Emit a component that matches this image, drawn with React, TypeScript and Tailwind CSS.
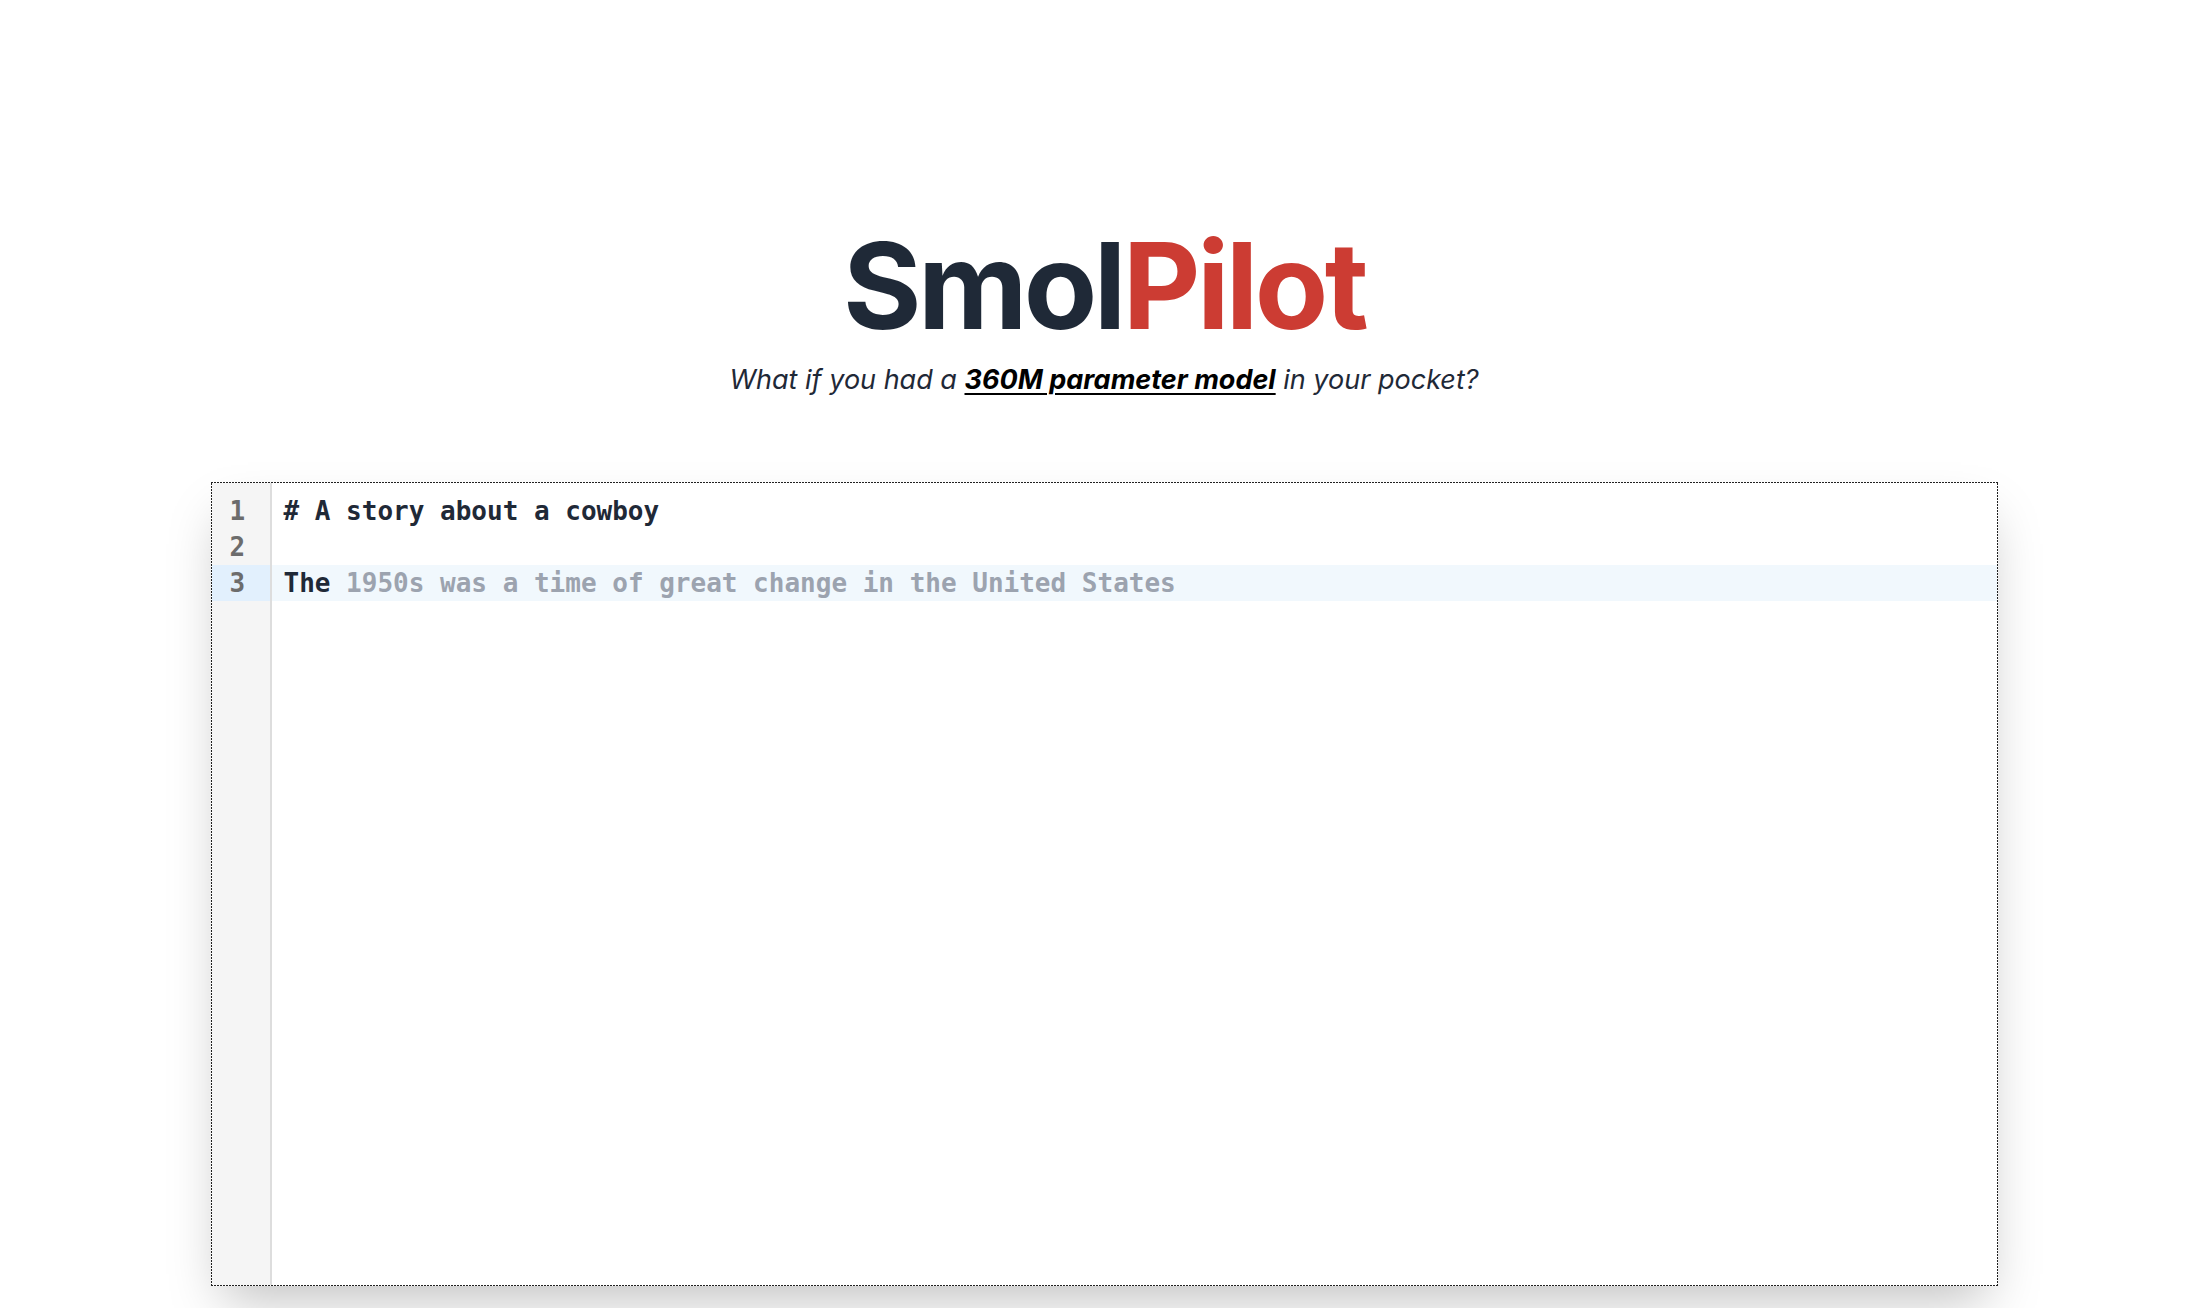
import React from 'react';

const lines = [
  { n: 1, text: '# A story about a cowboy', ghost: '' },
  { n: 2, text: '', ghost: '' },
  { n: 3, text: 'The', ghost: ' 1950s was a time of great change in the United States', active: true },
];

// dotted focus outline, drawn as 2px dots / 1px gaps like the original
const dotted =
  "bg-[image:repeating-linear-gradient(90deg,#212121_0_2px,transparent_2px_3px),repeating-linear-gradient(90deg,#212121_0_2px,transparent_2px_3px),repeating-linear-gradient(0deg,#212121_0_2px,transparent_2px_3px),repeating-linear-gradient(0deg,#212121_0_2px,transparent_2px_3px)] bg-[length:100%_1px,100%_1px,1px_100%,1px_100%] bg-[position:0_0,0_100%,0_0,100%_0] bg-no-repeat";

const Editor = () => {
  return (
    <div className={`mt-[84px] w-[1787px] h-[804px] p-[1px] shadow-2xl ${dotted}`}>
      <div className="h-full flex bg-white font-['DejaVu_Sans_Mono',monospace] font-bold text-[26px] leading-[36px]">
        <div className="w-[60px] h-full pt-[10px] bg-[#f5f5f5] border-r-2 border-[#dddddd] text-[#6c6c6c]">
          {lines.map((l) => (
            <div key={l.n} className={`h-[36px] pl-[18px] ${l.active ? 'bg-[#e2f0fd]' : ''}`}>
              {l.n}
            </div>
          ))}
        </div>
        <div className="flex-1 pt-[10px]">
          {lines.map((l) => (
            <div
              key={l.n}
              className={`h-[36px] pl-[12px] whitespace-pre text-[#1f2937] ${l.active ? 'bg-[#f1f8fd]' : ''}`}
            >
              {l.text}
              {l.ghost && <span className="text-[#9ca3af]">{l.ghost}</span>}
            </div>
          ))}
        </div>
      </div>
    </div>
  );
};

export default function App() {
  return (
    <div className="min-h-[1308px] bg-white pl-[18px] flex flex-col items-center font-['Inter',sans-serif]">
      <h1 className="mt-[226px] text-[120px] leading-[120px] font-bold tracking-[-0.03em]">
        <span className="text-[#1f2937]">Smol</span>
        <span className="text-[#cc3c33]">Pilot</span>
      </h1>
      <p className="mt-[16px] text-[27px] leading-[36px] italic text-[#1f2937]">
        What if you had a{' '}
        <a href="#" className="font-bold text-black underline decoration-2 underline-offset-4">
          360M parameter model
        </a>{' '}
        in your pocket?
      </p>
      <Editor />
    </div>
  );
}
